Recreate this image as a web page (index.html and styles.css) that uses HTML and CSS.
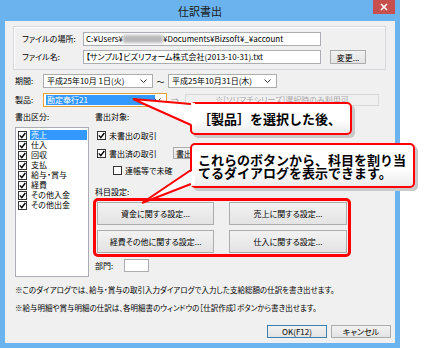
FILE: index.html
```html
<!DOCTYPE html>
<html lang="ja">
<head>
    <meta charset="UTF-8">
    <title>仕訳書出</title>
    <link rel="stylesheet" href="styles.css">
</head>
<body>

    <div class="window">
        <!-- タイトルバー -->
        <div class="titlebar">
            <span></span>
            <span class="title">仕訳書出</span>
            <span class="close">
                <svg width="8" height="8" viewBox="0 0 8 8"><path d="M1 1 L7 7 M7 1 L1 7" stroke="#fff" stroke-width="1.6"/></svg>
            </span>
        </div>

        <div class="content">
            <!-- ファイル -->
            <div class="filegroup">
                <span class="lbl">ファイルの場所:</span>
                <div class="tb">C:¥Users¥<span class="blur"></span>¥Documents¥Bizsoft¥_¥account</div>
                <span></span>
                <span class="lbl">ファイル名:</span>
                <div class="tb">【サンプル】ビズリフォーム株式会社(2013-10-31).txt</div>
                <div class="btn btn-change">変更...</div>
            </div>

            <div class="row period">
                <span class="lbl lbl-short">期間:</span>
                <div class="combo combo-from">平成25年10月 1日(火)<svg class="arrow" width="7" height="4" viewBox="0 0 7 4"><path d="M0.5 0.5 L3.5 3.5 L6.5 0.5" fill="none" stroke="#333" stroke-width="1"/></svg></div>
                <span class="tilde">～</span>
                <div class="combo combo-to">平成25年10月31日(木)<svg class="arrow" width="7" height="4" viewBox="0 0 7 4"><path d="M0.5 0.5 L3.5 3.5 L6.5 0.5" fill="none" stroke="#333" stroke-width="1"/></svg></div>
            </div>

            <div class="row product">
                <span class="lbl lbl-short">製品:</span>
                <div class="combo combo-product"><span class="picked">勘定奉行21</span><svg class="arrow" width="7" height="4" viewBox="0 0 7 4"><path d="M0.5 0.5 L3.5 3.5 L6.5 0.5" fill="none" stroke="#333" stroke-width="1"/></svg></div>
                <span class="goto">⇒</span>
                <div class="tb tb-off">※[ソリマチシリーズ]選択時のみ利用可</div>
            </div>

            <div class="main">
                <!-- 書出区分 -->
                <div class="col-kind">
                    <div class="lbl">書出区分:</div>
                    <ul class="list">
                        <li class="sel"><span class="cb"><svg width="7" height="7" viewBox="0 0 7 7"><path d="M0.8 3.4 L2.8 5.6 L6.3 1" fill="none" stroke="#000" stroke-width="1.4"/></svg></span><span class="it">売上</span></li>
                        <li><span class="cb"><svg width="7" height="7" viewBox="0 0 7 7"><path d="M0.8 3.4 L2.8 5.6 L6.3 1" fill="none" stroke="#000" stroke-width="1.4"/></svg></span><span class="it">仕入</span></li>
                        <li><span class="cb"><svg width="7" height="7" viewBox="0 0 7 7"><path d="M0.8 3.4 L2.8 5.6 L6.3 1" fill="none" stroke="#000" stroke-width="1.4"/></svg></span><span class="it">回収</span></li>
                        <li><span class="cb"><svg width="7" height="7" viewBox="0 0 7 7"><path d="M0.8 3.4 L2.8 5.6 L6.3 1" fill="none" stroke="#000" stroke-width="1.4"/></svg></span><span class="it">支払</span></li>
                        <li><span class="cb"><svg width="7" height="7" viewBox="0 0 7 7"><path d="M0.8 3.4 L2.8 5.6 L6.3 1" fill="none" stroke="#000" stroke-width="1.4"/></svg></span><span class="it">給与・賞与</span></li>
                        <li><span class="cb"><svg width="7" height="7" viewBox="0 0 7 7"><path d="M0.8 3.4 L2.8 5.6 L6.3 1" fill="none" stroke="#000" stroke-width="1.4"/></svg></span><span class="it">経費</span></li>
                        <li><span class="cb"><svg width="7" height="7" viewBox="0 0 7 7"><path d="M0.8 3.4 L2.8 5.6 L6.3 1" fill="none" stroke="#000" stroke-width="1.4"/></svg></span><span class="it">その他入金</span></li>
                        <li><span class="cb"><svg width="7" height="7" viewBox="0 0 7 7"><path d="M0.8 3.4 L2.8 5.6 L6.3 1" fill="none" stroke="#000" stroke-width="1.4"/></svg></span><span class="it">その他出金</span></li>
                    </ul>
                </div>

                <!-- 書出対象 / 科目設定 -->
                <div class="col-target">
                    <div class="lbl">書出対象:</div>
                    <div class="chk chk-1"><span class="cb"><svg width="7" height="7" viewBox="0 0 7 7"><path d="M0.8 3.4 L2.8 5.6 L6.3 1" fill="none" stroke="#000" stroke-width="1.4"/></svg></span>未書出の取引</div>
                    <div class="chk chk-2"><span class="cb"><svg width="7" height="7" viewBox="0 0 7 7"><path d="M0.8 3.4 L2.8 5.6 L6.3 1" fill="none" stroke="#000" stroke-width="1.4"/></svg></span><span class="chk-text">書出済の取引</span><div class="btn btn-done">書出</div></div>
                    <div class="chk chk-3"><span class="cb"></span><span class="clip">連帳等で未確</span></div>

                    <div class="lbl lbl-subject">科目設定:</div>
                    <div class="subject-grid">
                        <div class="btn">資金に関する設定...</div>
                        <div class="btn">売上に関する設定...</div>
                        <div class="btn">経費その他に関する設定...</div>
                        <div class="btn">仕入に関する設定...</div>
                    </div>

                    <div class="dept">
                        <span class="lbl">部門:</span>
                        <div class="tb tb-dept"></div>
                    </div>
                </div>
            </div>

            <p class="note note-1">※このダイアログでは、給与・賞与の取引入力ダイアログで入力した支給総額の仕訳を書き出せます。</p>
            <p class="note">※給与明細や賞与明細の仕訳は、各明細書のウィンドウの［仕訳作成］ボタンから書き出せます。</p>

            <div class="footer">
                <div class="btn btn-ok">OK(F12)</div>
                <div class="btn btn-cancel">キャンセル</div>
            </div>

            <!-- 注釈 -->
            <div class="redbox"></div>

            <div class="callout callout-1">
                <svg class="tail" width="1" height="1">
                    <polygon points="-57,-3 5,1 5,24" fill="#fff"/>
                    <path d="M-57 -3 L1 2 M-57 -3 L1 23" stroke="#f00" stroke-width="2" fill="none"/>
                </svg>
                ［製品］を選択した後、
            </div>

            <div class="callout callout-2">
                <svg class="tail" width="1" height="1">
                    <polygon points="-48,60 5,26 5,42" fill="#fff"/>
                    <path d="M-48 60 L1 27 M-48 60 L1 41" stroke="#f00" stroke-width="2" fill="none"/>
                </svg>
                これらのボタンから、科目を割り当<br>てるダイアログを表示できます。
            </div>
        </div>
    </div>

</body>
</html>
```

FILE: styles.css
```css
/* Grundlayout */
body {
    margin: 0;
    background: #fff;
    font-family: "Noto Sans CJK JP", "Noto Sans", sans-serif;
    font-size: 8px;
    color: #000;
}

.window {
    width: 400px;
    height: 348px;
    box-sizing: border-box;
    padding: 0 5px 5px;
    background: #6bb3ef;
    display: flex;
    flex-direction: column;
}

.titlebar {
    height: 21px;
    display: grid;
    grid-template-columns: 1fr auto 1fr;
    align-items: start;
}

.title {
    font-size: 11px;
    line-height: 11px;
    margin-top: 6px;
    color: #1a1a1a;
}

.close {
    justify-self: end;
    width: 22px;
    height: 14px;
    background: #c7504f;
    display: flex;
    align-items: center;
    justify-content: center;
}

.content {
    flex: 1;
    position: relative;
    background: #f0f0f0;
    padding-top: 5px;
    font-feature-settings: "palt";
}

.lbl {
    line-height: 10px;
    white-space: nowrap;
}

/* ファイル */
.filegroup {
    margin: 0 9px 0 8px;
    height: 44px;
    box-sizing: border-box;
    border: 1px solid #d5d8dc;
    box-shadow: inset 1px 1px 0 #fff;
    padding: 5px 0 0 8px;
    display: grid;
    grid-template-columns: 61px 238px 45px;
    grid-template-rows: 14px 14px;
    row-gap: 4px;
    align-items: center;
}

.tb {
    height: 14px;
    box-sizing: border-box;
    border: 1px solid #abadb3;
    background: #fff;
    padding: 0 2px;
    line-height: 12px;
    white-space: nowrap;
    overflow: hidden;
}

.blur {
    display: inline-block;
    width: 40px;
    height: 8px;
    vertical-align: -1px;
    background: #b8b8b8;
    filter: blur(1.5px);
}

.btn {
    box-sizing: border-box;
    border: 1px solid #acacac;
    background: linear-gradient(#f2f2f2, #e3e3e3);
    display: flex;
    align-items: center;
    justify-content: center;
    white-space: nowrap;
}

.btn-change {
    margin-left: 9px;
    width: 36px;
    height: 14px;
}

/* 期間・製品 */
.row {
    display: flex;
    align-items: center;
    margin-left: 10px;
    height: 14px;
}

.period {
    margin-top: 4px;
}

.product {
    margin-top: 5px;
}

.lbl-short {
    width: 28px;
}

.combo {
    position: relative;
    height: 14px;
    box-sizing: border-box;
    border: 1px solid #acacac;
    background: #fff;
    padding: 0 3px;
    line-height: 12px;
    white-space: nowrap;
}

.combo .arrow {
    position: absolute;
    right: 5px;
    top: 4px;
}

.combo-from {
    width: 110px;
}

.combo-to {
    width: 109px;
}

.tilde {
    width: 15px;
    text-align: center;
}

.combo-product {
    width: 124px;
    border-color: #e5a03a;
    padding: 1px 2px;
}

.picked {
    display: block;
    width: 108px;
    height: 10px;
    line-height: 10px;
    background: #3399ff;
    color: #fff;
    padding-left: 1px;
}

.goto {
    margin-left: 4px;
    width: 8px;
    color: #9a9a9a;
    font-size: 8px;
}

.tb-off {
    margin-left: 6px;
    width: 194px;
    height: 12px;
    line-height: 10px;
    border-color: #d9d9d9;
    background: #f0f0f0;
    color: #a8a8a8;
    text-align: center;
}

/* 書出区分・書出対象 */
.main {
    display: flex;
    margin: 5px 0 0 10px;
}

.col-kind {
    width: 74px;
}

.list {
    list-style: none;
    margin: 5px 0 0;
    padding: 2px 1px 0 2px;
    height: 150px;
    box-sizing: border-box;
    border: 1px solid #abadb3;
    background: #fff;
}

.list li {
    height: 10px;
    display: flex;
    align-items: center;
}

.cb {
    width: 9px;
    height: 9px;
    box-sizing: border-box;
    border: 1px solid #333;
    background: #fff;
    display: flex;
    align-items: center;
    justify-content: center;
    flex-shrink: 0;
    margin-right: 3px;
}

.it {
    flex: 1;
    height: 10px;
    line-height: 10px;
    padding-left: 1px;
}

.sel .it {
    background: #3399ff;
    color: #fff;
}

.col-target {
    margin-left: 6px;
}

.chk {
    display: flex;
    align-items: center;
    padding-left: 2px;
    height: 10px;
    white-space: nowrap;
}

.chk-1 {
    margin-top: 8px;
}

.chk-2 {
    margin-top: 7px;
    height: 12px;
}

.chk-text {
    width: 64px;
}

.btn-done {
    width: 50px;
    height: 12px;
    justify-content: flex-start;
    padding-left: 2px;
}

.chk-3 {
    margin-top: 6px;
    padding-left: 18px;
}

.clip {
    display: block;
    width: 62px;
    overflow: hidden;
}

.lbl-subject {
    margin-top: 12px;
}

.subject-grid {
    display: grid;
    grid-template-columns: 117px 118px;
    grid-template-rows: 23px 23px;
    column-gap: 15px;
    row-gap: 5px;
    margin: 5px 0 0 2px;
}

.dept {
    display: flex;
    align-items: center;
    margin-top: 6px;
    height: 13px;
}

.dept .lbl {
    width: 29px;
}

.tb-dept {
    width: 25px;
    height: 13px;
}

/* 注意書き */
.note {
    margin: 8px 0 0 10px;
    line-height: 10px;
    font-size: 7.5px;
    white-space: nowrap;
}

.footer {
    display: flex;
    justify-content: flex-end;
    gap: 4px;
    margin: 12px 4px 0 0;
}

.footer .btn {
    width: 60px;
    height: 13px;
}

.btn-ok {
    border-color: #3c7fb1;
}

/* 注釈 */
.redbox {
    position: absolute;
    left: 88px;
    top: 177px;
    width: 258px;
    height: 59px;
    box-sizing: border-box;
    border: 3px solid #f00;
    border-radius: 5px;
}

.callout {
    position: absolute;
    box-sizing: border-box;
    border: 2px solid #f00;
    border-radius: 5px;
    background: linear-gradient(#fff 55%, #ececec);
    box-shadow: 3px 3px 0 #c9c9c9;
    font-size: 13px;
    font-weight: bold;
    line-height: 13px;
    font-feature-settings: normal;
    padding-left: 6px;
    white-space: nowrap;
}

.callout .tail {
    position: absolute;
    left: -2px;
    top: -2px;
    overflow: visible;
}

.callout-1 {
    left: 185px;
    top: 81px;
    width: 162px;
    height: 33px;
    padding-top: 8px;
}

.callout-2 {
    left: 185px;
    top: 122px;
    width: 225px;
    height: 45px;
    padding-top: 8px;
}
```
